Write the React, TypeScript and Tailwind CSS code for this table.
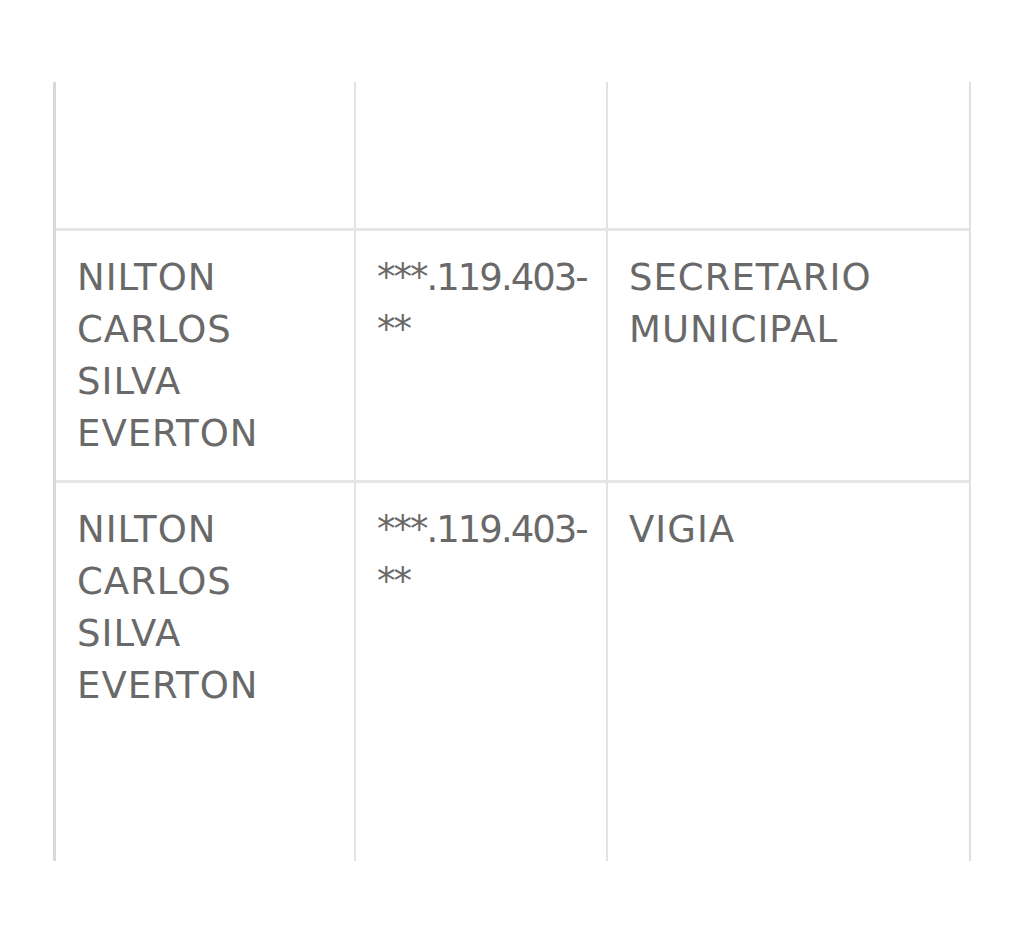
const rows = [
  { name: "NILTON CARLOS SILVA EVERTON", cpf: "***.119.403-**", role: "SECRETARIO MUNICIPAL" },
  { name: "NILTON CARLOS SILVA EVERTON", cpf: "***.119.403-**", role: "VIGIA" },
];

const Cell = ({ text, last, tight }: { text?: string; last?: boolean; tight?: boolean }) => (
  <div
    className={`pl-[21px] pr-[20px] pt-[21px] pb-[20px] ${tight ? "tracking-[-2px]" : "tracking-[1px]"} ${
      last ? "" : "border-r-2 border-[#e3e3e3]"
    }`}
  >
    {text}
  </div>
);

const App = () => {
  return (
    <div
      className="w-full min-h-screen bg-white pt-[82px] pl-[53px] text-[37px] leading-[52px] text-[#696969]"
      style={{ fontFamily: '"DejaVu Sans", sans-serif' }}
    >
      <div className="w-[918px] border-l-[3px] border-l-[#d8d8d8] border-r-2 border-r-[#e0e0e0]">
        {/* row cut off above */}
        <div className="grid grid-cols-[300px_252px_1fr] h-[149px] border-b-[3px] border-[#e6e6e6]">
          <Cell />
          <Cell />
          <Cell last />
        </div>
        {rows.map((r, i) => (
          <div
            key={i}
            className={`grid grid-cols-[300px_252px_1fr] ${
              i === rows.length - 1 ? "h-[378px]" : "border-b-[3px] border-[#e6e6e6]"
            }`}
          >
            <Cell text={r.name} />
            <Cell text={r.cpf} tight />
            <Cell text={r.role} last />
          </div>
        ))}
      </div>
    </div>
  );
};

export default App;
